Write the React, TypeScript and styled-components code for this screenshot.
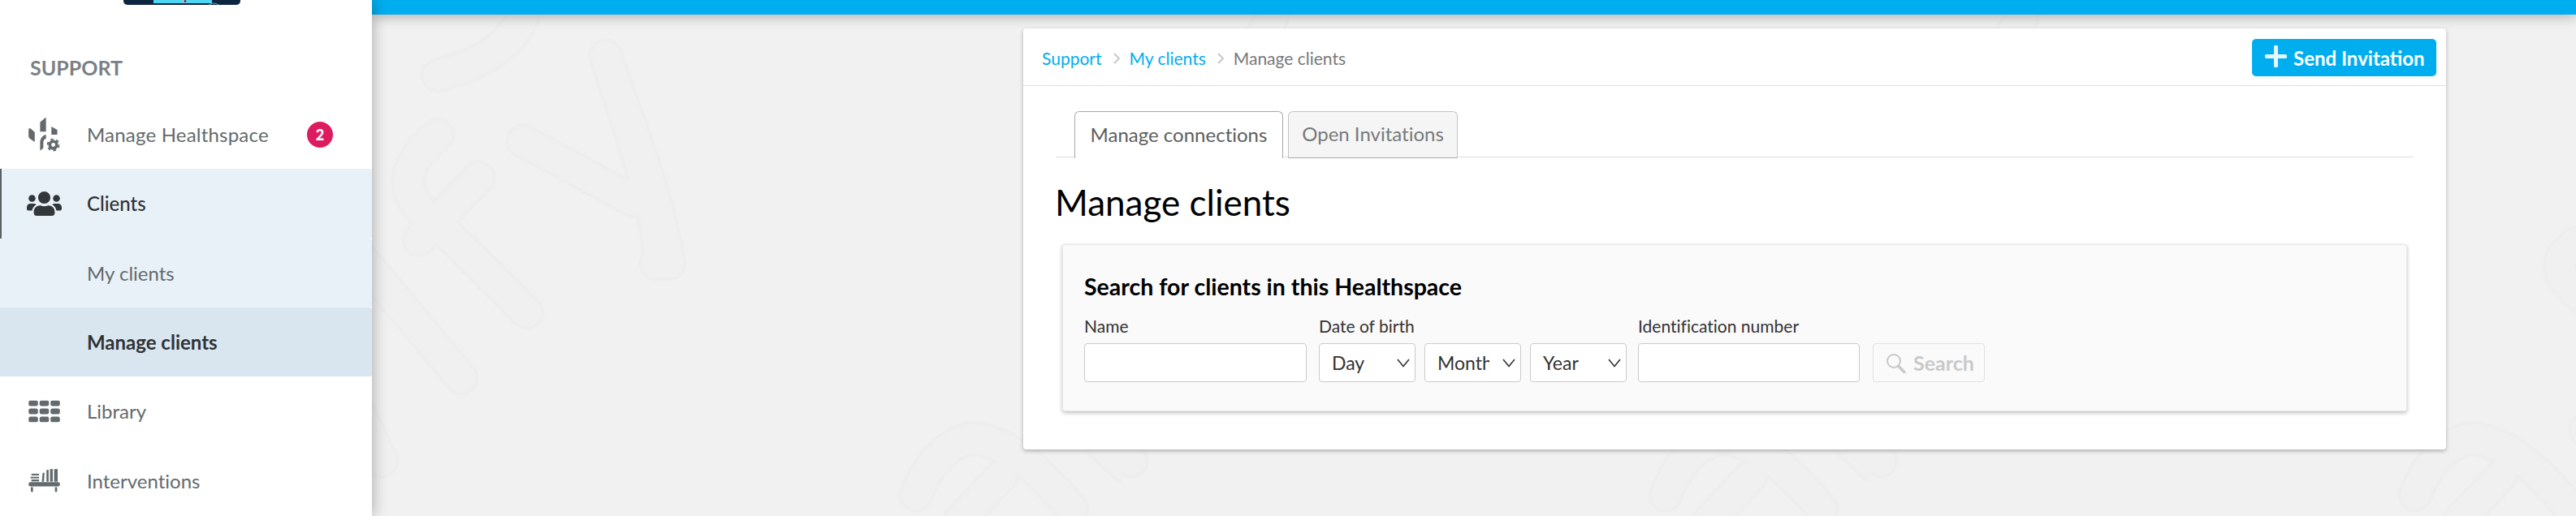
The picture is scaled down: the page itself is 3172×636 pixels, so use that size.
import React from 'react';
import styled, { createGlobalStyle } from 'styled-components';
import { FaUsers } from 'react-icons/fa';

const GlobalStyle = createGlobalStyle`
    html, body {
        margin: 0;
        padding: 0;
        width: 100%;
        height: 100%;
        overflow: hidden;
        background-color: #f1f1f1;
        font-family: "Lato", "Liberation Sans", sans-serif;
        font-variant-ligatures: none;
    }
    * {
        box-sizing: border-box;
    }
`

const Page = styled.div`
    display: flex;
    width: 3172px;
    height: 636px;
    overflow: hidden;
`

const Sidebar = styled.aside`
    position: relative;
    z-index: 3;
    flex: 0 0 458px;
    height: 636px;
    background-color: #fff;
    box-shadow: 0 0 18px rgba(0, 0, 0, 0.32);
`

const LogoStub = styled.svg`
    display: block;
    width: 144px;
    height: 6px;
    margin-left: 152px;
`

const SectionTitle = styled.div`
    height: 117px;
    padding: 64px 0 0 37px;
    font-size: 25px;
    line-height: 26px;
    font-weight: 700;
    color: #7b8085;
`

const NavRow = styled.div<{ $tone?: 'open' | 'active'; $marked?: boolean }>`
    position: relative;
    display: flex;
    align-items: center;
    height: 85.33px;
    padding-left: ${({ $marked }) => ($marked ? '105px' : '107px')};
    font-size: 24px;
    color: ${({ $tone }) => ($tone === 'active' ? '#2f3336' : '#636a6d')};
    background-color: ${({ $tone }) =>
        $tone === 'active' ? '#d9e6f0' : $tone === 'open' ? '#e9f1f8' : 'transparent'};
    border-radius: ${({ $tone }) => ($tone ? '0 3px 3px 0' : '0')};
    border-left: ${({ $marked }) => ($marked ? '2px solid #5b6063' : 'none')};
`

const NavLabel = styled.span<{ $weight?: number; $dark?: boolean; $wide?: boolean }>`
    font-weight: ${({ $weight }) => $weight ?? 400};
    color: ${({ $dark }) => ($dark ? '#2f3336' : 'inherit')};
    letter-spacing: ${({ $wide }) => ($wide ? '0.2px' : '0')};
`

const NavIcon = styled.span<{ $left: number }>`
    position: absolute;
    left: ${({ $left }) => $left}px;
    top: 50%;
    transform: translateY(-50%);
    display: flex;
    color: #636a6d;
`

const Badge = styled.span`
    position: absolute;
    left: 378px;
    top: 50%;
    transform: translateY(-50%);
    display: flex;
    align-items: center;
    justify-content: center;
    width: 32px;
    height: 32px;
    border-radius: 50%;
    background-color: #dd1c5f;
    color: #fff;
    font-size: 18px;
    font-weight: 900;
`

const Main = styled.main`
    position: relative;
    flex: 1;
    height: 636px;
    overflow: hidden;
`

const Watermark = styled.svg`
    position: absolute;
    left: 0;
    top: 0;
    width: 2714px;
    height: 636px;
`

const TopBar = styled.div`
    position: relative;
    z-index: 2;
    height: 18px;
    background-color: #00aeef;
    box-shadow: 0 2px 16px rgba(0, 0, 0, 0.3);
`

const Content = styled.div`
    position: relative;
    z-index: 1;
    padding: 17px 160px 0 802px;
`

const Card = styled.section`
    width: 1752px;
    height: 519px;
    background-color: #fff;
    border-radius: 4px;
    box-shadow: 0 2px 5px rgba(0, 0, 0, 0.28);
`

const CardHeader = styled.header`
    display: flex;
    align-items: center;
    justify-content: space-between;
    height: 71px;
    padding: 2px 12px 0 23px;
    border-bottom: 1px solid #dedede;
`

const Breadcrumb = styled.nav`
    display: flex;
    align-items: center;
    font-size: 21px;
    color: #77797b;
`

const CrumbLink = styled.span`
    color: #00aeef;
`

const CrumbArrow = styled.svg`
    width: 8px;
    height: 14px;
    margin: 2px 12px 0 14px;
`

const PrimaryButton = styled.button`
    display: flex;
    align-items: center;
    gap: 8px;
    width: 227px;
    height: 46px;
    padding: 0 0 0 16px;
    border: none;
    border-radius: 5px;
    background-color: #00aeef;
    color: #fff;
    font-family: inherit;
    font-size: 24px;
    font-weight: 700;
`

const PlusIcon = styled.svg`
    width: 27px;
    height: 27px;
    margin-top: -4px;
`

const TabBar = styled.div`
    display: flex;
    gap: 6px;
    height: 88px;
    margin: 0 40px;
    padding: 31px 0 0 23px;
    border-bottom: 1px solid #dedede;
`

const Tab = styled.div<{ $active?: boolean }>`
    display: flex;
    align-items: center;
    justify-content: center;
    height: 58px;
    width: ${({ $active }) => ($active ? '257px' : '209px')};
    padding-bottom: 3px;
    border: 1px solid ${({ $active }) => ($active ? '#a8a8a8' : '#c4c4c4')};
    border-bottom: ${({ $active }) => ($active ? 'none' : '1px solid #a8a8a8')};
    border-radius: 6px 6px 0 0;
    background-color: ${({ $active }) => ($active ? '#fff' : '#f5f5f5')};
    color: ${({ $active }) => ($active ? '#5c5e60' : '#77797b')};
    font-size: 24px;
`

const Title = styled.h1`
    margin: 0;
    height: 107px;
    padding: 29px 0 0 39px;
    font-size: 44px;
    line-height: 52px;
    font-weight: 400;
    color: #000;
`

const SearchPanel = styled.div`
    width: 1656px;
    height: 206px;
    margin-left: 48px;
    padding: 35px 26px 0;
    background-color: #fafafa;
    border: 1px solid #e6e6e6;
    border-radius: 3px;
    box-shadow: 0 2px 5px rgba(0, 0, 0, 0.25);
`

const PanelTitle = styled.h2`
    margin: 0 0 20px;
    font-size: 28.5px;
    line-height: 32px;
    font-weight: 700;
    color: #000;
`

const FormRow = styled.div`
    display: flex;
    align-items: flex-end;
`

const Field = styled.label<{ $gap: number }>`
    display: flex;
    flex-direction: column;
    margin-right: ${({ $gap }) => $gap}px;
`

const FieldLabel = styled.span`
    height: 34px;
    font-size: 21px;
    line-height: 26px;
    color: #333;
`

const TextBox = styled.input<{ $width: number }>`
    width: ${({ $width }) => $width}px;
    height: 48px;
    background-color: #fff;
    border: 1px solid #cbcbcb;
    border-radius: 4px;
`

const SelectRow = styled.div`
    display: flex;
    gap: 11px;
`

const SelectWrap = styled.div`
    position: relative;
    width: 119px;
    height: 48px;
`

const Select = styled.select`
    width: 100%;
    height: 100%;
    padding: 0 38px 0 15px;
    appearance: none;
    background-color: #fff;
    border: 1px solid #cbcbcb;
    border-radius: 4px;
    color: #333;
    font-family: inherit;
    font-size: 23px;
`

const SelectArrow = styled.svg`
    position: absolute;
    right: 7px;
    top: 19px;
    width: 16px;
    height: 11px;
    pointer-events: none;
`

const SearchButton = styled.button`
    display: flex;
    align-items: center;
    gap: 9px;
    width: 138px;
    height: 48px;
    padding: 0 0 0 15px;
    background-color: #fafafa;
    border: 1px solid #e2e2e2;
    border-radius: 4px;
    color: #c9c9c9;
    font-family: inherit;
    font-size: 25px;
    font-weight: 700;
`

const SearchGlyph = styled.svg`
    width: 25px;
    height: 25px;
`

const HealthspaceIcon = () => (
    <svg width="40" height="43" viewBox="105 430 120 130" fill="currentColor">
        <path d="M105 478 Q105 467 113 472 L128 486 V522 L110 510 Q105 506 105 500 Z" />
        <path d="M148 448 L170 430 V484 H148 Z" />
        <path d="M190 465 L212 477 V495 H190 Z" />
        <path d="M170 494 V510 Q160 512 160 525 V545 L148 555 V520 Q150 500 170 494 Z" />
        <circle cx="197" cy="533" r="13" fill="none" stroke="currentColor" strokeWidth="11" />
        <circle cx="197" cy="533" r="21" fill="none" stroke="currentColor" strokeWidth="6" strokeDasharray="11 11" />
    </svg>
)

const LibraryIcon = () => (
    <svg width="39" height="27" viewBox="107 522 114 80" fill="currentColor">
        {[522, 551.5, 581].map((y) =>
            [107, 147, 187].map((x) => <rect key={`${x}-${y}`} x={x} y={y} width="34" height="21" rx="7" />)
        )}
    </svg>
)

const ShelfIcon = () => (
    <svg width="39" height="29" viewBox="107 780 114 86" fill="currentColor">
        <rect x="107" y="830" width="114" height="15" rx="6" />
        <rect x="115" y="848" width="8" height="18" />
        <rect x="203" y="848" width="8" height="18" />
        <rect x="117" y="799" width="28" height="6" />
        <rect x="114" y="810" width="31" height="6" />
        <rect x="117" y="820" width="28" height="7" />
        <path d="M158 796 L165 795 L163 828 L155 828 Z" />
        <rect x="172" y="785" width="8" height="43" />
        <rect x="185" y="782" width="10" height="46" />
        <rect x="200" y="782" width="13" height="46" />
    </svg>
)

const watermarkStrokes = [
    // y
    'M288 69 C310 140 365 290 350 325',
    'M288 69 C315 150 350 230 366 325',
    'M186 174 L322 247',
    // f
    'M81 166 C35 205 30 240 81 276 L191 385',
    'M131 219 L58 296',
    // diagonal under the f
    'M-20 310 L110 466',
    // top blob
    'M81 93 C130 80 185 55 190 0',
    // left edge end
    'M-20 500 L12 568',
    // arch
    'M670 610 C690 560 715 545 739 540 C790 545 830 590 862 627',
    'M725 640 L775 587',
    'M925 573 L880 530',
    // right hand blob
    'M867 300 C840 320 840 340 880 370',
]

const stroke = (d: string, key: string, color: string, width: number) => (
    <path key={key} d={d} fill="none" stroke={color} strokeWidth={width} strokeLinecap="round" strokeLinejoin="round" />
)

const Pattern = () => (
    <Watermark viewBox="0 0 2714 636" aria-hidden="true">
        <defs>
            <filter id="soft">
                <feGaussianBlur stdDeviation="1.2" />
            </filter>
            <pattern id="mark" x="0" y="0" width="923" height="636" patternUnits="userSpaceOnUse">
                <g filter="url(#soft)">
                    {watermarkStrokes.map((d, i) => stroke(d, `o${i}`, '#ececec', 42))}
                    {watermarkStrokes.map((d, i) => stroke(d, `i${i}`, '#f0f0f0', 37))}
                </g>
            </pattern>
        </defs>
        <rect width="2714" height="636" fill="url(#mark)" />
    </Watermark>
)

const Arrow = () => (
    <CrumbArrow viewBox="0 0 8 14">
        <path d="M1 1 L7 7 L1 13" fill="none" stroke="#c4c4c4" strokeWidth="1.8" />
    </CrumbArrow>
)

const DateSelect = ({ label }: { label: string }) => (
    <SelectWrap>
        <Select defaultValue={label}>
            <option>{label}</option>
        </Select>
        <SelectArrow viewBox="0 0 16 11">
            <path d="M1 1 L8 9.5 L15 1" fill="none" stroke="#333" strokeWidth="1.6" />
        </SelectArrow>
    </SelectWrap>
)

export default function App() {
    return (
        <Page>
            <GlobalStyle />
            <Sidebar>
                <LogoStub viewBox="0 0 144 6">
                    <path d="M0 0 H144 V1 Q144 6 138 6 H6 Q0 6 0 1 Z" fill="#0e2540" />
                    <rect x="37" y="0" width="72" height="4" fill="#4fd6f5" />
                    <rect x="72" y="0" width="6" height="4" fill="#8fc7d6" />
                    <circle cx="76" cy="1.5" r="1.2" fill="#0e2540" />
                    <path d="M105 6 Q111 2 117 6" fill="none" stroke="#4fa9c9" strokeWidth="1" />
                </LogoStub>
                <SectionTitle>SUPPORT</SectionTitle>
                <NavRow>
                    <NavIcon $left={35}><HealthspaceIcon /></NavIcon>
                    <NavLabel $wide>Manage Healthspace</NavLabel>
                    <Badge>2</Badge>
                </NavRow>
                <NavRow $tone="open" $marked>
                    <NavIcon $left={31}><FaUsers size={43} color="#33373a" /></NavIcon>
                    <NavLabel $weight={500} $dark>Clients</NavLabel>
                </NavRow>
                <NavRow $tone="open">
                    <NavLabel>My clients</NavLabel>
                </NavRow>
                <NavRow $tone="active">
                    <NavLabel $weight={700}>Manage clients</NavLabel>
                </NavRow>
                <NavRow>
                    <NavIcon $left={35}><LibraryIcon /></NavIcon>
                    <NavLabel>Library</NavLabel>
                </NavRow>
                <NavRow>
                    <NavIcon $left={35}><ShelfIcon /></NavIcon>
                    <NavLabel>Interventions</NavLabel>
                </NavRow>
            </Sidebar>
            <Main>
                <Pattern />
                <TopBar />
                <Content>
                    <Card>
                        <CardHeader>
                            <Breadcrumb>
                                <CrumbLink>Support</CrumbLink>
                                <Arrow />
                                <CrumbLink>My clients</CrumbLink>
                                <Arrow />
                                <span>Manage clients</span>
                            </Breadcrumb>
                            <PrimaryButton>
                                <PlusIcon viewBox="0 0 27 27">
                                    <path d="M13.5 2 V25 M2 13.5 H25" stroke="#e4f7fd" strokeWidth="5" strokeLinecap="round" />
                                </PlusIcon>
                                Send Invitation
                            </PrimaryButton>
                        </CardHeader>
                        <TabBar>
                            <Tab $active>Manage connections</Tab>
                            <Tab>Open Invitations</Tab>
                        </TabBar>
                        <Title>Manage clients</Title>
                        <SearchPanel>
                            <PanelTitle>Search for clients in this Healthspace</PanelTitle>
                            <FormRow>
                                <Field $gap={15}>
                                    <FieldLabel>Name</FieldLabel>
                                    <TextBox $width={274} />
                                </Field>
                                <Field as="div" $gap={14}>
                                    <FieldLabel>Date of birth</FieldLabel>
                                    <SelectRow>
                                        <DateSelect label="Day" />
                                        <DateSelect label="Month" />
                                        <DateSelect label="Year" />
                                    </SelectRow>
                                </Field>
                                <Field $gap={16}>
                                    <FieldLabel>Identification number</FieldLabel>
                                    <TextBox $width={273} />
                                </Field>
                                <SearchButton>
                                    <SearchGlyph viewBox="0 0 25 25">
                                        <circle cx="10" cy="10" r="8" fill="none" stroke="#c9c9c9" strokeWidth="2" />
                                        <path d="M15.5 16 L23 24" stroke="#c9c9c9" strokeWidth="3.4" strokeLinecap="round" />
                                    </SearchGlyph>
                                    Search
                                </SearchButton>
                            </FormRow>
                        </SearchPanel>
                    </Card>
                </Content>
            </Main>
        </Page>
    );
}
